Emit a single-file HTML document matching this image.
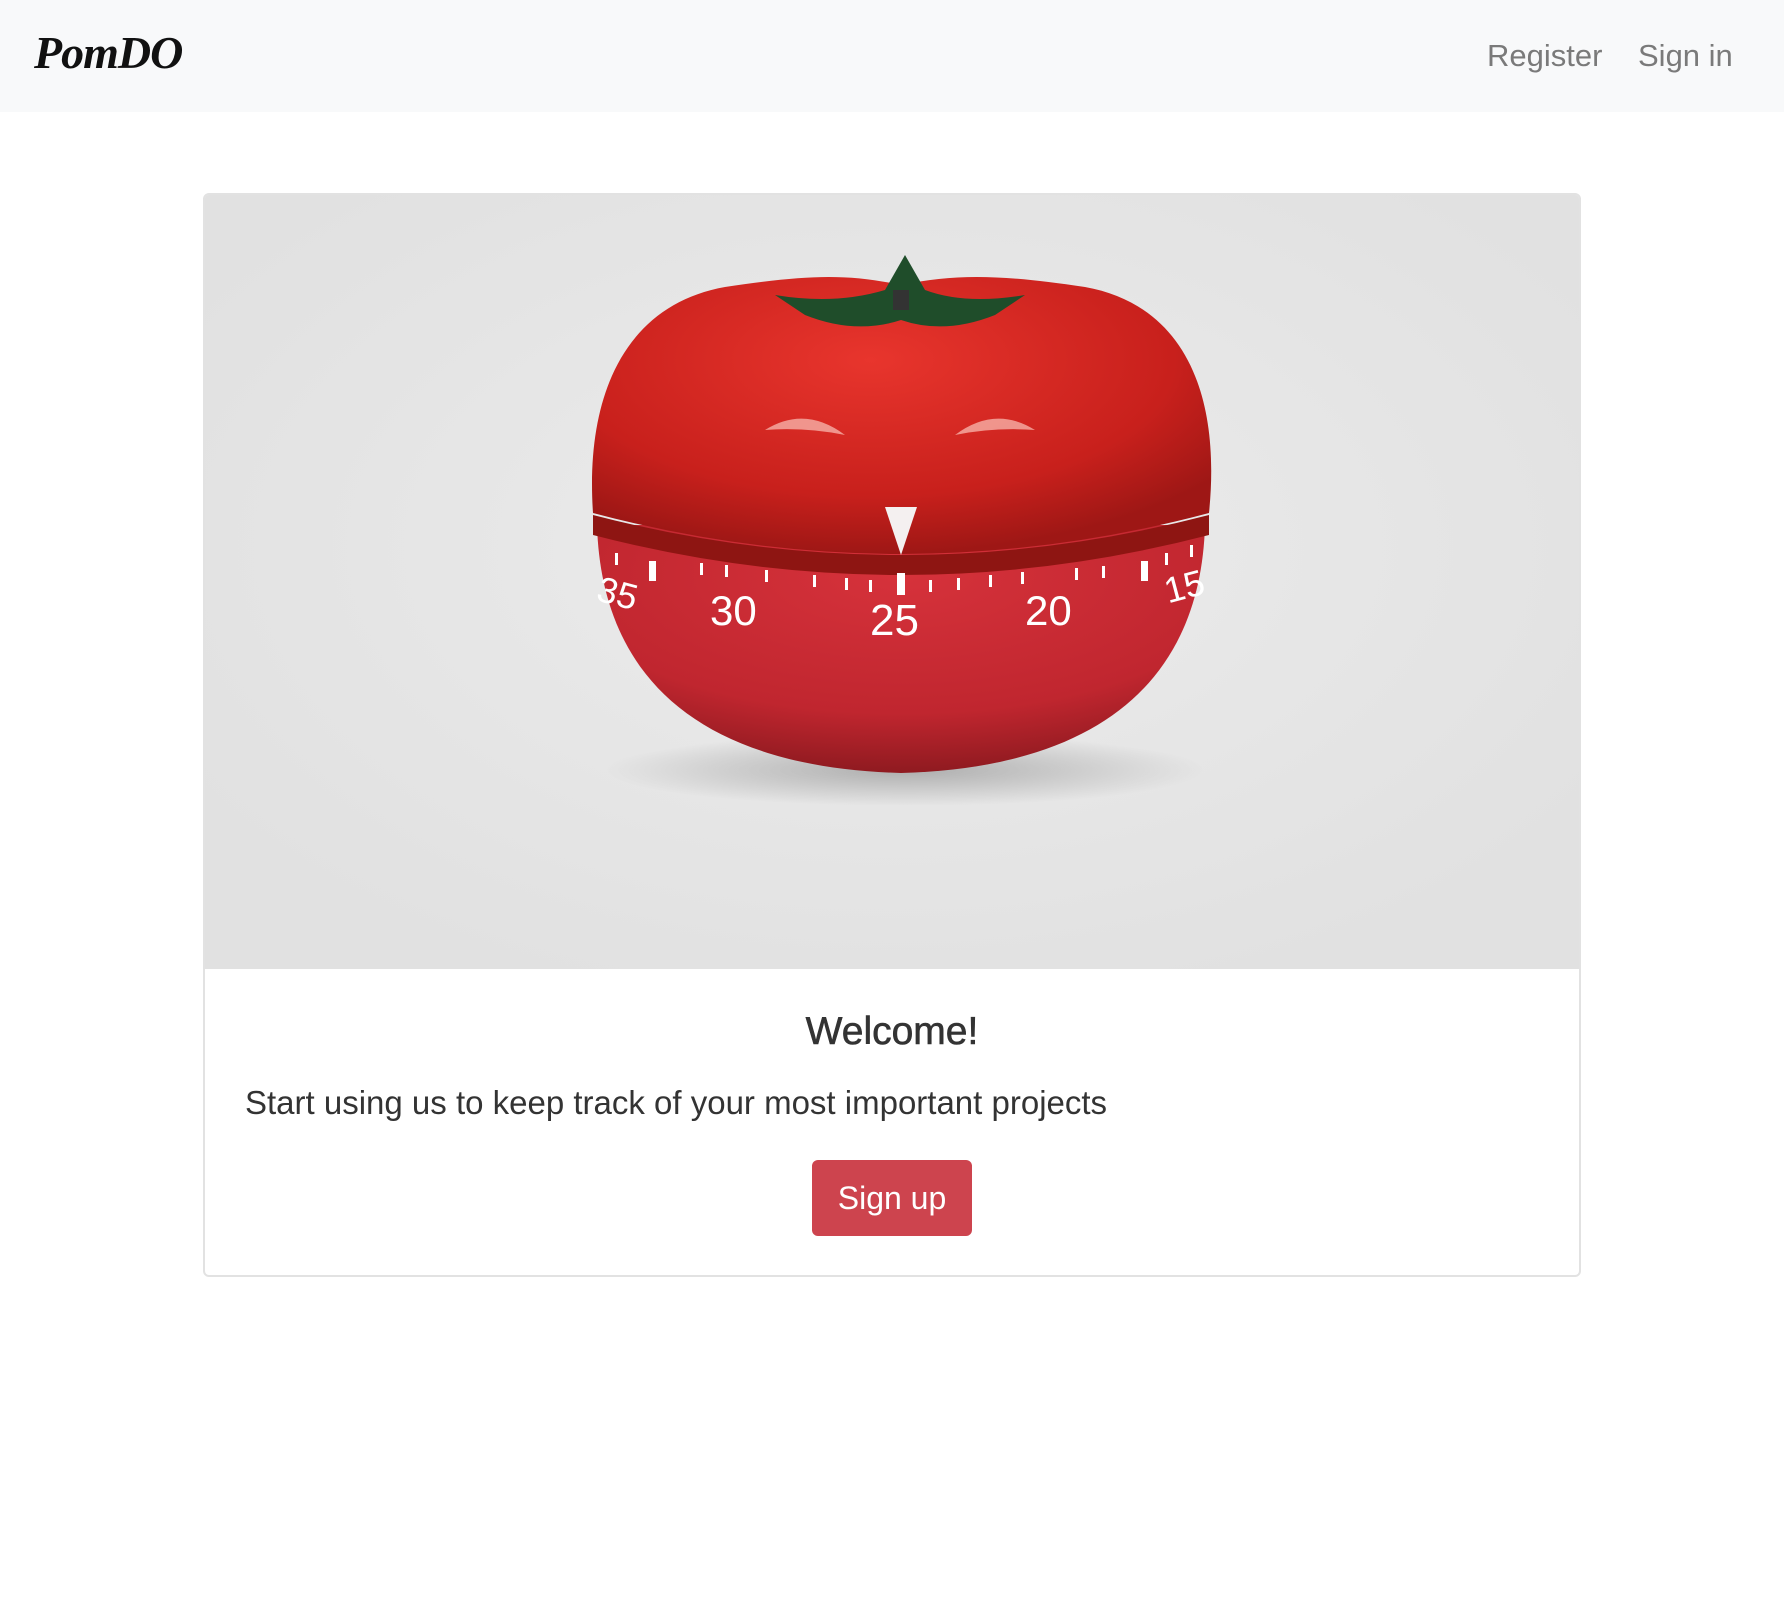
<!DOCTYPE html>
<html><head><meta charset="utf-8"><style>
*{box-sizing:border-box;margin:0;padding:0}
body{width:1784px;height:1606px;background:#fff;font-family:"Liberation Sans",sans-serif;position:relative;overflow:hidden}
.nav{position:absolute;left:0;top:0;width:1784px;height:112px;background:#f8f9fa}
.logo{position:absolute;left:34px;top:26px;font-family:"Liberation Serif",serif;font-style:italic;font-weight:bold;font-size:46px;color:#111;letter-spacing:-1px}
.link{position:absolute;top:38px;font-size:31px;color:#7a7a7a}
.card{position:absolute;left:203px;top:193px;width:1378px;height:1084px;border:2px solid #e2e2e2;border-radius:6px;overflow:hidden}
.img{position:absolute;left:0;top:0;width:1376px;height:774px;background:#e4e4e4;overflow:hidden}
h1{position:absolute;left:203px;width:1378px;top:1010px;text-align:center;font-size:39px;font-weight:normal;color:#333;-webkit-text-stroke:0.6px #333}
p{position:absolute;left:245px;top:1084px;font-size:33px;color:#333;white-space:nowrap}
.btn{position:absolute;left:812px;top:1160px;width:160px;height:76px;background:#cd444e;border-radius:6px;color:#fff;font-size:32px;text-align:center;line-height:76px}
</style></head><body>
<div class="nav"><div class="logo">PomDO</div>
<div class="link" style="left:1487px">Register</div>
<div class="link" style="left:1638px">Sign in</div></div>
<div class="card"><div class="img">
<svg width="1376" height="782" viewBox="0 0 1376 782">
<defs>
<radialGradient id="bg" cx="0.5" cy="0.45" r="0.6"><stop offset="0" stop-color="#ececec"/><stop offset="1" stop-color="#e1e1e1"/></radialGradient>
<radialGradient id="top" cx="0.45" cy="0.3" r="0.7"><stop offset="0" stop-color="#e8352d"/><stop offset="0.7" stop-color="#c8201c"/><stop offset="1" stop-color="#9e1715"/></radialGradient>
<radialGradient id="bot" cx="0.5" cy="0.2" r="0.8"><stop offset="0" stop-color="#d6323b"/><stop offset="0.7" stop-color="#c0262f"/><stop offset="1" stop-color="#8f1a20"/></radialGradient>
<radialGradient id="sh" cx="0.5" cy="0.5" r="0.5"><stop offset="0" stop-color="#000" stop-opacity="0.25"/><stop offset="1" stop-color="#000" stop-opacity="0"/></radialGradient>
</defs>
<rect width="1376" height="782" fill="url(#bg)"/>
<ellipse cx="700" cy="575" rx="300" ry="36" fill="url(#sh)"/>
<path d="M392 330 C396 470 480 572 696 578 C912 572 996 470 1000 330 Z" fill="url(#bot)"/>
<path d="M388 320 Q696 400 1004 320 L1004 340 Q696 420 388 340 Z" fill="#8e1512"/>
<path d="M388 318 C380 200 420 110 520 92 C600 80 640 78 696 90 C752 78 800 80 880 92 C980 110 1016 200 1004 318 Q696 400 388 318 Z" fill="url(#top)"/>
<path d="M560 235 Q600 210 640 240 Q600 232 560 235Z M750 240 Q790 210 830 235 Q790 232 750 240Z" fill="#f6b0a8" opacity="0.8"/>
<path d="M600 120 Q650 140 696 125 Q740 140 790 120 L820 100 Q760 110 720 95 L700 60 L680 95 Q630 110 570 100 Z" fill="#1f4d2a"/>
<rect x="688" y="95" width="16" height="20" fill="#333"/>
<polygon points="680,312 712,312 696,360" fill="#f4f0f0"/>
<g fill="#fff">
<rect x="692" y="378" width="8" height="22"/><rect x="444" y="366" width="7" height="20"/><rect x="936" y="366" width="7" height="20"/>
<rect x="608" y="380" width="3" height="12"/><rect x="640" y="383" width="3" height="12"/><rect x="664" y="385" width="3" height="12"/>
<rect x="724" y="385" width="3" height="12"/><rect x="752" y="383" width="3" height="12"/><rect x="784" y="380" width="3" height="12"/>
<rect x="520" y="370" width="3" height="12"/><rect x="495" y="368" width="3" height="12"/><rect x="560" y="375" width="3" height="12"/>
<rect x="816" y="377" width="3" height="12"/><rect x="870" y="373" width="3" height="12"/><rect x="897" y="371" width="3" height="12"/>
<rect x="960" y="358" width="3" height="12"/><rect x="985" y="350" width="3" height="12"/><rect x="410" y="358" width="3" height="12"/>
</g>
<g fill="#fff" font-family="Liberation Sans,sans-serif" font-size="44">
<text x="665" y="440">25</text><text x="505" y="430" font-size="42">30</text><text x="820" y="430" font-size="42">20</text>
<text x="392" y="410" font-size="36" transform="rotate(15 410 400)">35</text><text x="960" y="405" font-size="36" transform="rotate(-15 975 395)">15</text>
</g>
</svg></div>
</div>
<h1>Welcome!</h1>
<p>Start using us to keep track of your most important projects</p>
<div class="btn">Sign up</div>
</body></html>
